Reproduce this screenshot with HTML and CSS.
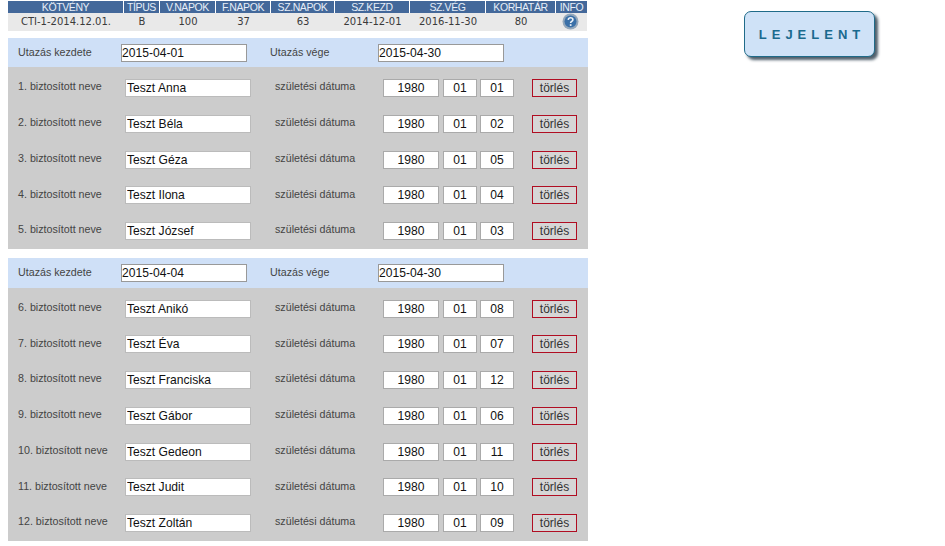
FILE: index.html
```html
<!DOCTYPE html>
<html lang="hu">
<head>
<meta charset="utf-8">
<title>Lejelentés</title>
<link rel="stylesheet" href="styles.css">
</head>
<body>
<div class="page">
  <main class="main">
    <div class="policy">
      <div class="th">KÖTVÉNY</div><div class="th">TÍPUS</div><div class="th">V.NAPOK</div><div class="th">F.NAPOK</div><div class="th">SZ.NAPOK</div><div class="th">SZ.KEZD</div><div class="th">SZ.VÉG</div><div class="th">KORHATÁR</div><div class="th">INFO</div>
      <div class="td">CTI-1-2014.12.01.</div><div class="td">B</div><div class="td">100</div><div class="td">37</div><div class="td">63</div><div class="td">2014-12-01</div><div class="td">2016-11-30</div><div class="td">80</div>
      <div class="td"><svg class="info" viewBox="0 0 17 17" width="17" height="17"><circle cx="8.5" cy="8.5" r="8" fill="#93a7bb"/><circle cx="8.5" cy="8.5" r="6" fill="#3a70a8"/><path d="M6.2 6.8c.2-1.3 1.1-2 2.4-2 1.300 0 2.300.8 2.300 1.900 0 1.800-2.300 1.700-2.300 3.400" fill="none" stroke="#eef3f8" stroke-width="1.600"/><rect x="7.800" y="11.200" width="1.700" height="1.700" fill="#eef3f8"/></svg></div>
    </div>

    <section class="trip first">
      <div class="trip-head">
        <span class="lbl lbl-start">Utazás kezdete</span><input class="inp inp-date" value="2015-04-01">
        <span class="lbl lbl-end">Utazás vége</span><input class="inp inp-date" value="2015-04-30">
      </div>
      <div class="people">
        <div class="person"><span class="lbl lbl-name">1. biztosított neve</span><input class="inp inp-name" value="Teszt Anna"><span class="lbl lbl-birth">születési dátuma</span><input class="inp inp-y" value="1980"><input class="inp inp-md" value="01"><input class="inp inp-md" value="01"><button class="del">törlés</button></div>
        <div class="person"><span class="lbl lbl-name">2. biztosított neve</span><input class="inp inp-name" value="Teszt Béla"><span class="lbl lbl-birth">születési dátuma</span><input class="inp inp-y" value="1980"><input class="inp inp-md" value="01"><input class="inp inp-md" value="02"><button class="del">törlés</button></div>
        <div class="person"><span class="lbl lbl-name">3. biztosított neve</span><input class="inp inp-name" value="Teszt Géza"><span class="lbl lbl-birth">születési dátuma</span><input class="inp inp-y" value="1980"><input class="inp inp-md" value="01"><input class="inp inp-md" value="05"><button class="del">törlés</button></div>
        <div class="person"><span class="lbl lbl-name">4. biztosított neve</span><input class="inp inp-name" value="Teszt Ilona"><span class="lbl lbl-birth">születési dátuma</span><input class="inp inp-y" value="1980"><input class="inp inp-md" value="01"><input class="inp inp-md" value="04"><button class="del">törlés</button></div>
        <div class="person"><span class="lbl lbl-name">5. biztosított neve</span><input class="inp inp-name" value="Teszt József"><span class="lbl lbl-birth">születési dátuma</span><input class="inp inp-y" value="1980"><input class="inp inp-md" value="01"><input class="inp inp-md" value="03"><button class="del">törlés</button></div>
      </div>
    </section>

    <section class="trip second">
      <div class="trip-head">
        <span class="lbl lbl-start">Utazás kezdete</span><input class="inp inp-date" value="2015-04-04">
        <span class="lbl lbl-end">Utazás vége</span><input class="inp inp-date" value="2015-04-30">
      </div>
      <div class="people">
        <div class="person"><span class="lbl lbl-name">6. biztosított neve</span><input class="inp inp-name" value="Teszt Anikó"><span class="lbl lbl-birth">születési dátuma</span><input class="inp inp-y" value="1980"><input class="inp inp-md" value="01"><input class="inp inp-md" value="08"><button class="del">törlés</button></div>
        <div class="person"><span class="lbl lbl-name">7. biztosított neve</span><input class="inp inp-name" value="Teszt Éva"><span class="lbl lbl-birth">születési dátuma</span><input class="inp inp-y" value="1980"><input class="inp inp-md" value="01"><input class="inp inp-md" value="07"><button class="del">törlés</button></div>
        <div class="person"><span class="lbl lbl-name">8. biztosított neve</span><input class="inp inp-name" value="Teszt Franciska"><span class="lbl lbl-birth">születési dátuma</span><input class="inp inp-y" value="1980"><input class="inp inp-md" value="01"><input class="inp inp-md" value="12"><button class="del">törlés</button></div>
        <div class="person"><span class="lbl lbl-name">9. biztosított neve</span><input class="inp inp-name" value="Teszt Gábor"><span class="lbl lbl-birth">születési dátuma</span><input class="inp inp-y" value="1980"><input class="inp inp-md" value="01"><input class="inp inp-md" value="06"><button class="del">törlés</button></div>
        <div class="person"><span class="lbl lbl-name">10. biztosított neve</span><input class="inp inp-name" value="Teszt Gedeon"><span class="lbl lbl-birth">születési dátuma</span><input class="inp inp-y" value="1980"><input class="inp inp-md" value="01"><input class="inp inp-md" value="11"><button class="del">törlés</button></div>
        <div class="person"><span class="lbl lbl-name">11. biztosított neve</span><input class="inp inp-name" value="Teszt Judit"><span class="lbl lbl-birth">születési dátuma</span><input class="inp inp-y" value="1980"><input class="inp inp-md" value="01"><input class="inp inp-md" value="10"><button class="del">törlés</button></div>
        <div class="person"><span class="lbl lbl-name">12. biztosított neve</span><input class="inp inp-name" value="Teszt Zoltán"><span class="lbl lbl-birth">születési dátuma</span><input class="inp inp-y" value="1980"><input class="inp inp-md" value="01"><input class="inp inp-md" value="09"><button class="del">törlés</button></div>
      </div>
    </section>
  </main>
  <aside class="side">
    <button class="report">LEJELENT</button>
  </aside>
</div>
</body>
</html>
```

FILE: styles.css
```css
* { box-sizing: border-box; }
html, body { margin: 0; padding: 0; background: #fff; overflow: hidden; }
body { font-family: "Liberation Sans", Arial, sans-serif; }
.page { display: flex; align-items: flex-start; padding: 1px 0 0 8px; height: 546px; }
.main { width: 580px; flex: none; }
.side { padding: 10px 0 0 156px; }

.policy {
  display: grid;
  grid-template-columns: 116px 36px 56px 55px 64px 75px 76px 70px 31px;
  grid-template-rows: 12px 18px;
  background: #e9e9e9;
  width: 579px;
}
.th {
  background: #43689a;
  color: #e6eef8;
  font-size: 10.500px;
  letter-spacing: -0.400px;
  line-height: 12px;
  text-align: center;
  border-right: 1px solid #fff;
  white-space: nowrap;
}
.th:nth-child(9) { border-right: 0; }
.td {
  font-family: "DejaVu Sans", Verdana, sans-serif;
  font-size: 10px;
  line-height: 18px;
  color: #3a3a3a;
  text-align: center;
  white-space: nowrap;
}
.info { display: block; margin: 0 0 0 6px; }

.trip.first { margin-top: 7px; }
.trip.second { margin-top: 8.700px; }
.trip-head {
  display: flex;
  align-items: center;
  background: #cfe0f7;
  height: 29px;
  padding-left: 10px;
}
.second .trip-head { height: 30px; }
.people { background: #cccccc; }
.first .people { padding-top: 3.300px; }
.second .people { padding-top: 3px; }
.person { display: flex; align-items: center; height: 35.750px; padding-left: 10px; }

.lbl { font-size: 10.700px; color: #444; white-space: nowrap; position: relative; top: -1.700px; }
.trip-head .lbl { top: -1px; }
.lbl-start { width: 103px; }
.lbl-end { width: 108px; margin-left: 23px; }
.lbl-name { width: 107px; }
.lbl-birth { width: 108px; margin-left: 24px; }

.inp {
  font-family: "Liberation Sans", Arial, sans-serif;
  font-size: 12.100px;
  height: 18px;
  padding: 0;
  color: #111;
  background: #fff;
  border: 1px solid #aaa;
  border-radius: 0;
  outline: 0;
}
.inp-date { width: 126px; border-color: #999; }
.inp-name { width: 126px; padding-left: 1px; border-color: #bbb; }
.inp-y { width: 56px; text-align: center; margin-right: 4px; }
.inp-md { width: 34px; text-align: center; margin-right: 3px; }
.del {
  font-family: "Liberation Sans", Arial, sans-serif;
  font-size: 12px;
  width: 45px;
  height: 18px;
  padding: 0;
  margin-left: 15px;
  color: #333;
  background: #d6d6d6;
  border: 1px solid #b00d22;
  border-radius: 0;
}
.report {
  display: block;
  width: 131px;
  height: 46px;
  padding: 0 0 0 5px;
  font-family: "Liberation Sans", Arial, sans-serif;
  font-size: 13px;
  font-weight: bold;
  letter-spacing: 5px;
  color: #1a6a8e;
  background: #cfe2f7;
  border: 1px solid #1f6b89;
  border-radius: 7px;
  box-shadow: 3px 3px 3px #4f5f6b;
}
```
